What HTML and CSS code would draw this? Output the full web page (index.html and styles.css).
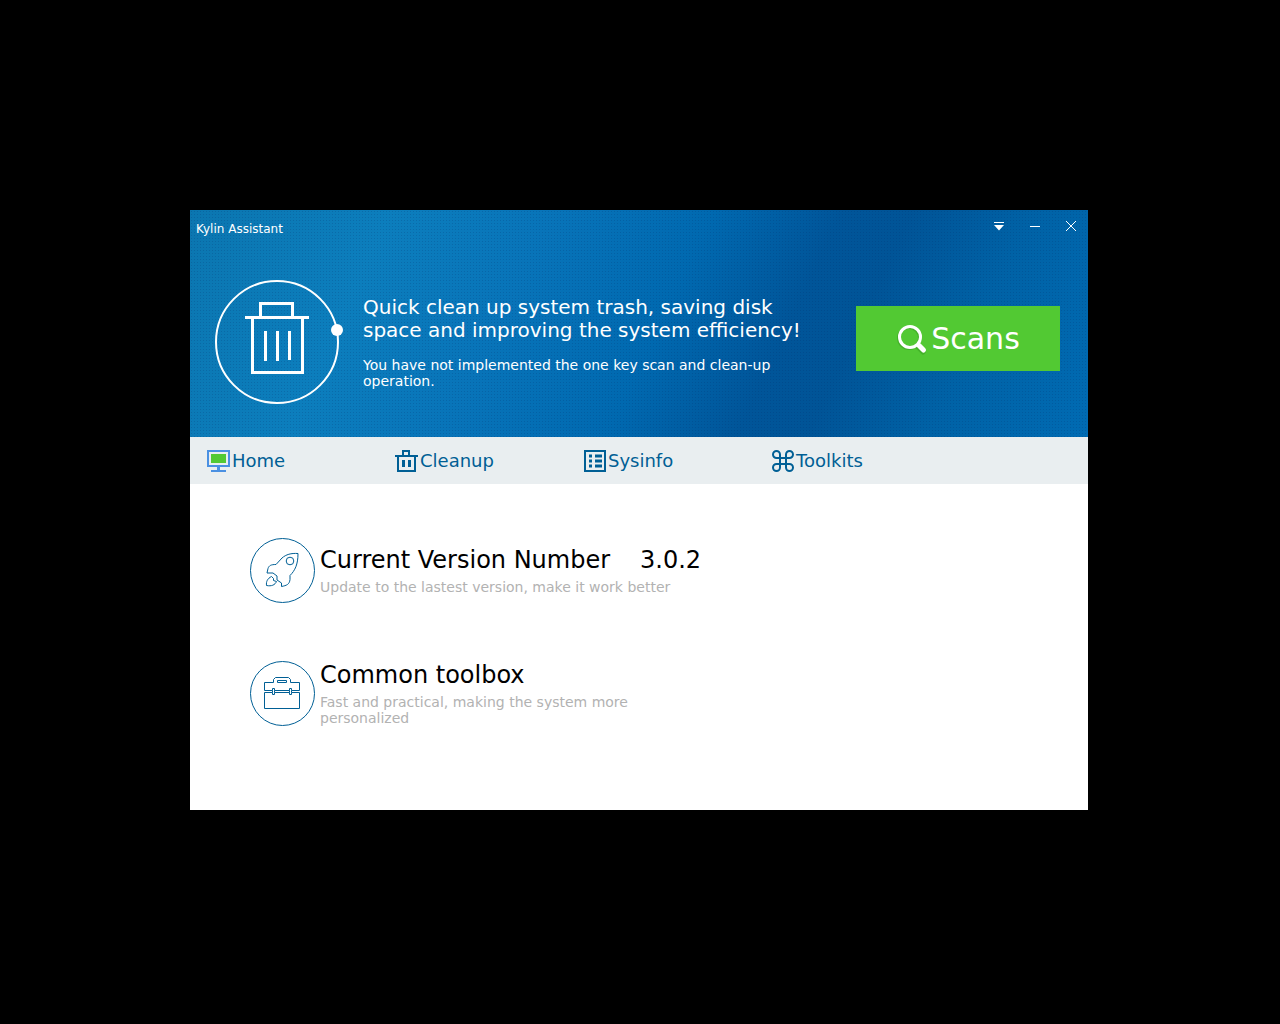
FILE: index.html
```html
<!DOCTYPE html>
<html lang="en">
<head>
<meta charset="utf-8">
<title>Kylin Assistant</title>
<link rel="stylesheet" href="styles.css">
</head>
<body>
<main class="window">
  <header class="hero">
    <div class="titlebar">
      <h1 class="app-title">Kylin Assistant</h1>
      <div class="controls">
        <button class="control" type="button" aria-label="Menu"><svg width="12" height="12" viewBox="0 0 12 12"><path d="M1 2h10v1H1zM1 5h10L6 10.500z" fill="#fff"/></svg></button>
        <button class="control" type="button" aria-label="Minimize"><svg width="12" height="12" viewBox="0 0 12 12"><path d="M1 6h10v1H1z" fill="#fff"/></svg></button>
        <button class="control" type="button" aria-label="Close"><svg width="12" height="12" viewBox="0 0 12 12"><path d="M1 1l10 10M11 1L1 11" stroke="#fff" fill="none"/></svg></button>
      </div>
    </div>
    <div class="banner">
      <svg class="trash" width="130" height="126" viewBox="0 0 130 126" fill="none" stroke="#fff">
        <circle cx="63" cy="63" r="61" stroke-width="2"/>
        <circle cx="123" cy="51" r="6" fill="#fff" stroke="none"/>
        <path d="M31 38.500h64M46.500 38V24.500h32V38M38.500 38v55.500h50V38" stroke-width="3"/>
        <path d="M51.500 52v30M63.500 52v30M75.500 52v29" stroke-width="3"/>
      </svg>
      <div class="message">
        <h2 class="headline">Quick clean up system trash, saving disk space and improving the system efficiency!</h2>
        <p class="status">You have not implemented the one key scan and clean-up operation.</p>
      </div>
      <button class="scan" type="button">
        <svg width="32" height="32" viewBox="0 0 32 32" fill="none">
          <g stroke="#2f8f1c" opacity=".4"><circle cx="13" cy="15" r="10.500" stroke-width="3"/><path d="M21 23l6 6" stroke-width="5" stroke-linecap="round"/></g>
          <g stroke="#fff"><circle cx="14" cy="14" r="10.500" stroke-width="3"/><path d="M21 21l2 2" stroke-width="3"/><path d="M23 22.500l4.500 4.500" stroke-width="5" stroke-linecap="round"/></g>
        </svg>
        <span>Scans</span>
      </button>
    </div>
  </header>
  <nav class="tabs">
    <a class="tab" href="#home"><svg width="24" height="24" viewBox="0 0 24 24"><path d="M2 2h21v15H2z" fill="none" stroke="#4a90e2" stroke-width="2"/><path d="M5 5h15v9H5z" fill="#52c933"/><path d="M11 18h3v3h-3zM5 21h15v2H5z" fill="#4a90e2"/></svg><span>Home</span></a>
    <a class="tab" href="#cleanup"><svg width="24" height="24" viewBox="0 0 24 24" fill="none" stroke="#005f95"><path d="M1 7h23M9 7V2h6V7M4 7v15h17V7" stroke-width="2"/><path d="M9.500 11v7M15.500 11v7" stroke-width="3"/></svg><span>Cleanup</span></a>
    <a class="tab" href="#sysinfo"><svg width="24" height="24" viewBox="0 0 24 24" fill="none" stroke="#005f95" stroke-width="2"><path d="M3 2h20v20H3z"/><path d="M7 7h3M13 7h7M7 12h3M13 12h7M7 17h3M13 17h7" stroke-width="3"/></svg><span>Sysinfo</span></a>
    <a class="tab" href="#toolkits"><svg width="24" height="24" viewBox="0 0 24 24" fill="none" stroke="#005f95" stroke-width="2"><path d="M10 9V5.500A3.500 3.500 0 1 0 6.500 9h13A3.500 3.500 0 1 0 16 5.500v13a3.500 3.500 0 1 0 3.500-3.500h-13A3.500 3.500 0 1 0 10 18.500z"/></svg><span>Toolkits</span></a>
  </nav>
  <section class="features">
    <article class="feature">
      <svg width="66" height="66" viewBox="0 0 66 66" fill="none" stroke="#005f95">
        <circle cx="32.500" cy="33.500" r="32"/>
        <path d="M48 16.500c-7-.5-12 1-16 4.500l-6 6.500c-5 0-7 1-8 4l-1 4.500h6l4 3v4l4.500 3v3.500c5-1 8-2 8.500-7v-4c5-5 8-11 8-22z"/>
        <circle cx="40" cy="24" r="3.800"/>
        <path d="M21.500 39.500c-4 2-5.500 5-5 9 5 1 8.500-.5 10-4l-3-1v-2z"/>
      </svg>
      <div class="feature-text">
        <h2 class="feature-title">Current Version Number <span class="version">3.0.2</span></h2>
        <p class="feature-note">Update to the lastest version, make it work better</p>
      </div>
    </article>
    <article class="feature">
      <svg width="66" height="66" viewBox="0 0 66 66" fill="none" stroke="#005f95">
        <circle cx="32.500" cy="33.500" r="32"/>
        <path d="M14.500 22.500h9v-3l2-2h13l2 2v3h9v8h-8v-2h-2v2h-15v-2h-2v2h-8zM14.500 32.500h8v2h2v-2h15v2h2v-2h8v16h-35z"/>
        <path d="M27.500 20.500h9v2h-9zM22.500 30.500v2M24.500 30.500v2M39.500 30.500v2M41.500 30.500v2"/>
      </svg>
      <div class="feature-text">
        <h2 class="feature-title">Common toolbox</h2>
        <p class="feature-note">Fast and practical, making the system more personalized</p>
      </div>
    </article>
  </section>
</main>
</body>
</html>
```
FILE: styles.css
```css
* {
  box-sizing: border-box;
}

body {
  margin: 0;
  min-height: 100vh;
  padding: 0 2px 4px 0;
  display: flex;
  align-items: center;
  justify-content: center;
  background: #000;
  font-family: "DejaVu Sans", sans-serif;
}

h1, h2, p {
  margin: 0;
  font-weight: 400;
}

button {
  border: 0;
  font-family: inherit;
  color: #fff;
}

svg {
  display: block;
  flex: none;
}

.window {
  width: 100%;
  max-width: 898px;
  background: #fff;
}

.hero {
  padding-bottom: 32px;
  color: #fff;
  background:
    radial-gradient(circle, rgba(0, 40, 100, 0.2) 0 1px, transparent 1px) 0 0 / 3px 3px,
    linear-gradient(115deg, #0b76b0 0%, #0c7ebd 20%, #0874b9 36%, #0069b0 52%, #005599 65%, #005497 72%, #0062a6 84%, #006bb3 100%);
}

.titlebar {
  display: flex;
  justify-content: space-between;
  padding: 0 0 0 6px;
}

.app-title {
  padding-top: 11px;
  font-size: 12px;
  line-height: 16px;
}

.controls {
  display: flex;
}

.control {
  display: flex;
  width: 36px;
  height: 32px;
  padding: 0 0 0 2px;
  align-items: center;
  justify-content: center;
  background: none;
}

.banner {
  display: flex;
  align-items: flex-start;
  padding: 37px 28px 0 24px;
}

.message {
  flex: 1;
  padding: 17px 48px 0 19px;
}

.headline {
  font-size: 20px;
  line-height: 23px;
}

.status {
  margin-top: 15px;
  font-size: 14px;
  line-height: 16px;
}

.scan {
  display: flex;
  width: 204px;
  height: 65px;
  margin-top: 27px;
  padding: 0;
  gap: 3px;
  align-items: center;
  justify-content: center;
  background: #52c933;
  font-size: 30px;
}

.tabs {
  display: flex;
  height: 47px;
  padding-left: 16px;
  background: #e9eef0;
}

.tab {
  display: flex;
  width: 188px;
  gap: 2px;
  align-items: center;
  color: #005f95;
  font-size: 18px;
  text-decoration: none;
}

.features {
  display: grid;
  gap: 57px;
  padding: 53px 60px 84px;
}

.feature {
  display: flex;
  gap: 4px;
  align-items: center;
}

.feature-title {
  display: flex;
  gap: 30px;
  font-size: 24px;
  line-height: 28px;
}

.feature-note {
  max-width: 360px;
  margin-top: 5px;
  color: #b2b2b2;
  font-size: 14px;
  line-height: 16px;
}
```
